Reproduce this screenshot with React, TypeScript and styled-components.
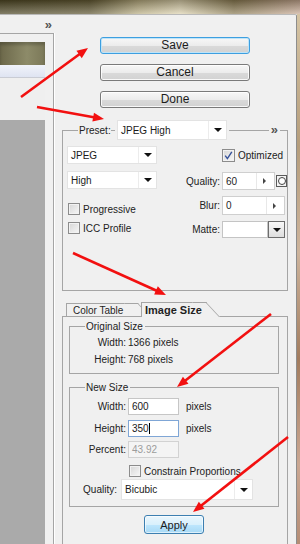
import React from 'react';
import styled, { createGlobalStyle } from 'styled-components';

const LINE = '#a5a5a5';

const GlobalStyle = createGlobalStyle`
  html, body { margin: 0; padding: 0; }
  body {
    width: 300px;
    height: 544px;
    overflow: hidden;
    background: #f0f0f0;
    font-family: "Liberation Sans", Arial, sans-serif;
    font-size: 10px;
    color: #1f1f1f;
  }
  * { box-sizing: border-box; }
`;

const Screen = styled.div`
  position: relative;
  width: 300px;
  height: 544px;
  overflow: hidden;
  display: flex;
  flex-direction: column;
`;

const PhotoTop = styled.div`
  height: 14px;
  flex: none;
  background:
    linear-gradient(to bottom, rgba(25, 20, 0, 0.35), rgba(255, 255, 245, 0.3)),
    linear-gradient(to right, #4b4528 0%, #5f5737 30%, #b9ae88 46%, #ddd3b5 60%, #8a7b58 78%, #c9ab9b 100%);
`;

const Stage = styled.div`
  flex: 1;
  display: flex;
  min-height: 0;
`;

const Dialog = styled.div`
  width: 297px;
  flex: none;
  display: flex;
  background: #f0f0f0;
  border-top: 1px solid #b9b9b9;
  border-right: 1px solid #8d8d8d;
  border-top-right-radius: 2px;
`;

const PhotoEdge = styled.div`
  flex: 1;
  background: linear-gradient(to bottom, #d5c4a4 0%, #b59d7b 25%, #cdb49c 45%, #a27c5e 65%, #caa792 85%, #b58d75 100%);
`;

const SidePane = styled.div`
  width: 54px;
  flex: none;
  display: flex;
  flex-direction: column;
`;

const SideHeader = styled.div`
  height: 18px;
  display: flex;
  justify-content: flex-end;
  align-items: center;
  padding: 1px 2px 0 0;
`;

const Chevrons = styled.span<{ $mx?: number }>`
  font-size: 13px;
  font-weight: 700;
  color: #555555;
  margin: 0 ${p => p.$mx ?? 0}px;
  line-height: 10px;
`;

const PreviewBox = styled.div`
  flex: 1;
  border-top: 1px solid ${LINE};
  border-right: 1px solid ${LINE};
  box-shadow: 1px 0 0 #ffffff;
  padding: 8px 8px 0 0;
  display: flex;
  flex-direction: column;
`;

const Thumb = styled.div`
  height: 23px;
  background: linear-gradient(to right, #6c684a, #8d8b69 60%, #7b7858);
  box-shadow: inset 0 3px 3px rgba(0, 0, 0, 0.2);
`;

const SelectedRow = styled.div`
  height: 13px;
  background: linear-gradient(#f1f3fa, #dfe4f2);
  border-bottom: 1px solid #c9ccd4;
`;

const BlankRow = styled.div`
  height: 42px;
  background: #efefef;
`;

const GrayFill = styled.div`
  flex: 1;
  background: #aaaaaa;
`;

const MainPane = styled.div`
  flex: 1;
  min-width: 0;
  display: flex;
  flex-direction: column;
  padding: 22px 8px 0 8px;
`;

const ButtonStack = styled.div`
  align-self: center;
  width: 150px;
  display: flex;
  flex-direction: column;
  gap: 10px;
`;

const DialogButton = styled.button<{ $focused?: boolean }>`
  height: 17px;
  margin: 0;
  padding: 0;
  font-family: "Liberation Sans", Arial, sans-serif;
  font-size: 12px;
  line-height: 15px;
  color: #1c1c1c;
  border-radius: 3px;
  border: 1px solid ${p => (p.$focused ? '#3d9fe0' : '#7a7a7a')};
  background: linear-gradient(#f7f7f7, #ececec 50%, #dadada 51%, #d2d2d2);
  box-shadow: inset 0 0 0 1px ${p => (p.$focused ? '#bfe4f8' : 'rgba(255,255,255,0.85)')};
`;

const SettingsGroup = styled.div`
  margin-top: 12px;
  display: flex;
  flex-direction: column;
`;

const GroupHeader = styled.div<{ $h: number }>`
  height: ${p => p.$h}px;
  display: flex;
  align-items: center;
  flex: none;
`;

const Corner = styled.div<{ $side: 'left' | 'right'; $w: number }>`
  align-self: flex-end;
  height: 50%;
  width: ${p => p.$w}px;
  flex: none;
  border-top: 1px solid ${LINE};
  ${p => (p.$side === 'left' ? `border-left: 1px solid ${LINE};` : `border-right: 1px solid ${LINE};`)}
`;

const Rule = styled.div<{ $w?: number; $ml?: number }>`
  align-self: flex-end;
  height: 50%;
  border-top: 1px solid ${LINE};
  margin-left: ${p => p.$ml ?? 0}px;
  ${p => (p.$w ? `width: ${p.$w}px; flex: none;` : 'flex: 1;')}
`;

const HeaderLabel = styled.span<{ $w?: number }>`
  margin-left: 1px;
  ${p => (p.$w ? `width: ${p.$w}px; flex: none;` : 'padding-right: 2px;')}
  font-size: 10px;
  color: #222;
  white-space: nowrap;
`;

const SettingsBody = styled.div`
  height: 151px;
  border: 1px solid ${LINE};
  border-top: none;
  display: flex;
  padding-left: 4px;
`;

const FormatColumn = styled.div`
  width: 90px;
  flex: none;
  display: flex;
  flex-direction: column;
  padding-top: 6px;
`;

const Select = styled.div<{ $w: number; $h: number; $ml?: number; $mt?: number }>`
  width: ${p => p.$w}px;
  height: ${p => p.$h}px;
  flex: none;
  margin-left: ${p => p.$ml ?? 0}px;
  margin-top: ${p => p.$mt ?? 0}px;
  display: flex;
  background: #ffffff;
  border: 1px solid #e3e3e3;
`;

const SelectValue = styled.span`
  flex: 1;
  display: flex;
  align-items: center;
  padding-left: 3px;
  font-size: 10px;
  color: #1a1a1a;
  white-space: nowrap;
`;

const SelectArrow = styled.span`
  width: 18px;
  flex: none;
  display: flex;
  align-items: center;
  justify-content: center;
  border-left: 1px solid #ececec;
`;

const DownTriangle = styled.span`
  width: 0;
  height: 0;
  border-left: 4px solid transparent;
  border-right: 4px solid transparent;
  border-top: 4px solid #111;
`;

const RightTriangle = styled.span`
  width: 0;
  height: 0;
  border-top: 3px solid transparent;
  border-bottom: 3px solid transparent;
  border-left: 3px solid #444;
`;

const CheckRow = styled.label<{ $mt?: number; $ml?: number }>`
  display: flex;
  align-items: center;
  gap: 3px;
  margin-top: ${p => p.$mt ?? 0}px;
  margin-left: ${p => p.$ml ?? 0}px;
  font-size: 10px;
  color: #222;
  white-space: nowrap;
`;

const CheckBox = styled.span<{ $size?: number }>`
  width: ${p => p.$size ?? 12}px;
  height: ${p => p.$size ?? 12}px;
  flex: none;
  display: inline-flex;
  align-items: center;
  justify-content: center;
  border: 1px solid #8c8c8c;
  background: linear-gradient(135deg, #d6d6d6, #f7f7f7);
  box-shadow: inset 0 0 0 1px #f2f2f2;
`;

const OptionsColumn = styled.div`
  flex: 1;
  display: flex;
  flex-direction: column;
  padding: 9px 1px 0 0;
`;

const OptionRow = styled.div<{ $h: number; $mt?: number }>`
  height: ${p => p.$h}px;
  margin-top: ${p => p.$mt ?? 0}px;
  display: grid;
  grid-template-columns: 1fr 64px;
  column-gap: 2px;
  align-items: center;
`;

const OptionLabel = styled.span`
  text-align: right;
  font-size: 10px;
  color: #222;
`;

const OptionControl = styled.div`
  grid-column: 2;
  height: 100%;
  display: flex;
  align-items: center;
  gap: 1px;
`;

const NumberField = styled.div<{ $w: number }>`
  width: ${p => p.$w}px;
  height: 100%;
  flex: none;
  display: flex;
  background: #ffffff;
  border: 1px solid #cfcfcf;
`;

const FieldValue = styled.span`
  flex: 1;
  display: flex;
  align-items: center;
  padding-left: 3px;
  font-size: 10px;
`;

const StepArrow = styled.span`
  width: 18px;
  flex: none;
  display: flex;
  align-items: center;
  padding-left: 6px;
  border-left: 1px solid #e8e8e8;
`;

const RoundButton = styled.span`
  width: 11px;
  height: 12px;
  flex: none;
  display: flex;
  align-items: center;
  justify-content: center;
  border: 1px solid #5a5a5a;
  background: #f4f4f4;
`;

const Ring = styled.span`
  width: 8px;
  height: 8px;
  border-radius: 50%;
  border: 1px solid #444;
  background: #ffffff;
`;

const SwatchField = styled.span`
  width: 46px;
  height: 100%;
  flex: none;
  background: #ffffff;
  border: 1px solid #c4c4c4;
`;

const SwatchButton = styled.span`
  width: 17px;
  height: 100%;
  flex: none;
  margin-left: -1px;
  display: flex;
  align-items: center;
  justify-content: center;
  border: 1px solid #6d6d6d;
  background: linear-gradient(#f8f8f8, #dedede);
`;

const TabStrip = styled.div`
  position: relative;
  z-index: 1;
  margin-top: 11px;
  height: 14px;
  flex: none;
  display: flex;
  align-items: flex-end;
  padding-left: 4px;
`;

const Tab = styled.div<{ $active?: boolean; $w: number }>`
  position: relative;
  z-index: ${p => (p.$active ? 2 : 1)};
  width: ${p => p.$w}px;
  flex: none;
  height: ${p => (p.$active ? 15 : 13)}px;
  margin-bottom: ${p => (p.$active ? -1 : 0)}px;
  margin-right: 4px;
  padding-left: ${p => (p.$active ? 3 : 6)}px;
  display: flex;
  align-items: center;
  background: #f0f0f0;
  border-top: 1px solid ${LINE};
  border-left: 1px solid ${LINE};
  font-size: ${p => (p.$active ? 11 : 10)}px;
  font-weight: ${p => (p.$active ? 700 : 400)};
  color: #1f1f1f;
  white-space: nowrap;
  &::after {
    content: '';
    position: absolute;
    z-index: -1;
    top: -1px;
    bottom: 0;
    right: -13px;
    width: 13px;
    background: #f0f0f0;
    border-top: 1px solid ${LINE};
    border-right: 1px solid ${LINE};
    transform: skewX(43deg);
    transform-origin: bottom left;
  }
`;

const TabPanel = styled.div`
  flex: 1;
  display: flex;
  flex-direction: column;
  border: 1px solid ${LINE};
  border-bottom: none;
  padding: 3px 8px 0 6px;
`;

const SizeGroup = styled.div<{ $mt?: number }>`
  margin-top: ${p => p.$mt ?? 0}px;
  display: flex;
  flex-direction: column;
`;

const SizeBody = styled.div<{ $pt: number; $pb: number }>`
  border: 1px solid ${LINE};
  border-top: none;
  display: flex;
  flex-direction: column;
  padding: ${p => p.$pt}px 0 ${p => p.$pb}px 0;
`;

const SizeRow = styled.div<{ $h: number; $mt?: number }>`
  height: ${p => p.$h}px;
  margin-top: ${p => p.$mt ?? 0}px;
  display: flex;
  align-items: center;
  gap: 2px;
  font-size: 10px;
  color: #222;
`;

const SizeLabel = styled.span<{ $w?: number }>`
  width: ${p => p.$w ?? 56}px;
  flex: none;
  text-align: right;
`;

const Unit = styled.span`
  margin-left: 5px;
`;

const TextBox = styled.span<{ $focused?: boolean; $disabled?: boolean }>`
  width: 51px;
  height: 100%;
  flex: none;
  display: flex;
  align-items: center;
  padding-left: 3px;
  font-size: 10px;
  color: ${p => (p.$disabled ? '#9c9c9c' : '#1a1a1a')};
  background: ${p => (p.$disabled ? '#f4f4f4' : '#ffffff')};
  border: 1px solid ${p => (p.$focused ? '#7fa6d6' : p.$disabled ? '#d2d2d2' : '#c6c6c6')};
`;

const Caret = styled.span`
  width: 1px;
  height: 11px;
  background: #000;
`;

const ApplyButton = styled.button`
  align-self: center;
  margin-top: 8px;
  width: 60px;
  height: 19px;
  padding: 0;
  font-family: "Liberation Sans", Arial, sans-serif;
  font-size: 11px;
  color: #1c1c1c;
  border-radius: 3px;
  border: 1px solid #3c7fb1;
  background: linear-gradient(#eaf6fd, #d9f0fc 50%, #bee6fd 51%, #a7d9f5);
  box-shadow: inset 0 0 0 1px rgba(255, 255, 255, 0.6);
`;

const ArrowLayer = styled.svg`
  position: absolute;
  left: 0;
  top: 0;
  width: 300px;
  height: 544px;
  pointer-events: none;
`;

type Arrow = { x1: number; y1: number; x2: number; y2: number };

const arrows: Arrow[] = [
  { x1: 21, y1: 97, x2: 88, y2: 48 },
  { x1: 37, y1: 107, x2: 104, y2: 119 },
  { x1: 73, y1: 253, x2: 166, y2: 295 },
  { x1: 271, y1: 314, x2: 177, y2: 387 },
  { x1: 288, y1: 437, x2: 193, y2: 512 },
];

function RedArrow({ x1, y1, x2, y2 }: Arrow) {
  const dx = x2 - x1;
  const dy = y2 - y1;
  const len = Math.hypot(dx, dy);
  const ux = dx / len;
  const uy = dy / len;
  const headLen = 11;
  const half = 4.5;
  const bx = x2 - ux * headLen;
  const by = y2 - uy * headLen;
  const p1 = `${bx - uy * half},${by + ux * half}`;
  const p2 = `${bx + uy * half},${by - ux * half}`;
  return (
    <g>
      <line x1={x1} y1={y1} x2={bx + ux * 2} y2={by + uy * 2} stroke="#f21010" strokeWidth={2.6} />
      <polygon points={`${x2},${y2} ${p1} ${p2}`} fill="#f21010" />
    </g>
  );
}

function CheckMark() {
  return (
    <svg width="9" height="9" viewBox="0 0 9 9">
      <path d="M1.2 4.6 L3.4 7.6 L7.8 0.8" fill="none" stroke="#35519a" strokeWidth="1.4" />
    </svg>
  );
}

export default function App() {
  return (
    <>
      <GlobalStyle />
      <Screen>
        <PhotoTop />
        <Stage>
          <Dialog>
            <SidePane>
              <SideHeader>
                <Chevrons>»</Chevrons>
              </SideHeader>
              <PreviewBox>
                <Thumb />
                <SelectedRow />
                <BlankRow />
                <GrayFill />
              </PreviewBox>
            </SidePane>
            <MainPane>
              <ButtonStack>
                <DialogButton $focused>Save</DialogButton>
                <DialogButton>Cancel</DialogButton>
                <DialogButton>Done</DialogButton>
              </ButtonStack>

              <SettingsGroup>
                <GroupHeader $h={20}>
                  <Corner $side="left" $w={16} />
                  <HeaderLabel $w={32}>Preset:</HeaderLabel>
                  <Rule $w={4} />
                  <Select $w={110} $h={20} $ml={2}>
                    <SelectValue>JPEG High</SelectValue>
                    <SelectArrow>
                      <DownTriangle />
                    </SelectArrow>
                  </Select>
                  <Rule $ml={2} />
                  <Chevrons $mx={2}>»</Chevrons>
                  <Corner $side="right" $w={8} />
                </GroupHeader>
                <SettingsBody>
                  <FormatColumn>
                    <Select $w={90} $h={18}>
                      <SelectValue>JPEG</SelectValue>
                      <SelectArrow>
                        <DownTriangle />
                      </SelectArrow>
                    </Select>
                    <Select $w={90} $h={18} $mt={7}>
                      <SelectValue>High</SelectValue>
                      <SelectArrow>
                        <DownTriangle />
                      </SelectArrow>
                    </Select>
                    <CheckRow $mt={14} $ml={1}>
                      <CheckBox />
                      Progressive
                    </CheckRow>
                    <CheckRow $mt={7} $ml={1}>
                      <CheckBox />
                      ICC Profile
                    </CheckRow>
                  </FormatColumn>
                  <OptionsColumn>
                    <OptionRow $h={13}>
                      <OptionControl>
                        <CheckRow>
                          <CheckBox $size={13}>
                            <CheckMark />
                          </CheckBox>
                          Optimized
                        </CheckRow>
                      </OptionControl>
                    </OptionRow>
                    <OptionRow $h={18} $mt={10}>
                      <OptionLabel>Quality:</OptionLabel>
                      <OptionControl>
                        <NumberField $w={53}>
                          <FieldValue>60</FieldValue>
                          <StepArrow>
                            <RightTriangle />
                          </StepArrow>
                        </NumberField>
                        <RoundButton>
                          <Ring />
                        </RoundButton>
                      </OptionControl>
                    </OptionRow>
                    <OptionRow $h={19} $mt={6}>
                      <OptionLabel>Blur:</OptionLabel>
                      <OptionControl>
                        <NumberField $w={63}>
                          <FieldValue>0</FieldValue>
                          <StepArrow>
                            <RightTriangle />
                          </StepArrow>
                        </NumberField>
                      </OptionControl>
                    </OptionRow>
                    <OptionRow $h={17} $mt={6}>
                      <OptionLabel>Matte:</OptionLabel>
                      <OptionControl>
                        <SwatchField />
                        <SwatchButton>
                          <DownTriangle />
                        </SwatchButton>
                      </OptionControl>
                    </OptionRow>
                  </OptionsColumn>
                </SettingsBody>
              </SettingsGroup>

              <TabStrip>
                <Tab $w={71}>Color Table</Tab>
                <Tab $w={66} $active>
                  Image Size
                </Tab>
              </TabStrip>
              <TabPanel>
                <SizeGroup>
                  <GroupHeader $h={12}>
                    <Corner $side="left" $w={16} />
                    <HeaderLabel>Original Size</HeaderLabel>
                    <Rule />
                    <Corner $side="right" $w={4} />
                  </GroupHeader>
                  <SizeBody $pt={2} $pb={5}>
                    <SizeRow $h={17}>
                      <SizeLabel>Width:</SizeLabel>
                      <span>1366 pixels</span>
                    </SizeRow>
                    <SizeRow $h={17}>
                      <SizeLabel>Height:</SizeLabel>
                      <span>768 pixels</span>
                    </SizeRow>
                  </SizeBody>
                </SizeGroup>

                <SizeGroup $mt={7}>
                  <GroupHeader $h={12}>
                    <Corner $side="left" $w={16} />
                    <HeaderLabel>New Size</HeaderLabel>
                    <Rule />
                    <Corner $side="right" $w={4} />
                  </GroupHeader>
                  <SizeBody $pt={5} $pb={6}>
                    <SizeRow $h={17}>
                      <SizeLabel>Width:</SizeLabel>
                      <TextBox>600</TextBox>
                      <Unit>pixels</Unit>
                    </SizeRow>
                    <SizeRow $h={17} $mt={5}>
                      <SizeLabel>Height:</SizeLabel>
                      <TextBox $focused>
                        350
                        <Caret />
                      </TextBox>
                      <Unit>pixels</Unit>
                    </SizeRow>
                    <SizeRow $h={17} $mt={4}>
                      <SizeLabel>Percent:</SizeLabel>
                      <TextBox $disabled>43.92</TextBox>
                    </SizeRow>
                    <SizeRow $h={12} $mt={7}>
                      <SizeLabel />
                      <CheckRow $ml={1}>
                        <CheckBox />
                        Constrain Proportions
                      </CheckRow>
                    </SizeRow>
                    <SizeRow $h={21} $mt={2}>
                      <SizeLabel $w={47}>Quality:</SizeLabel>
                      <Select $w={132} $h={21} $ml={2}>
                        <SelectValue>Bicubic</SelectValue>
                        <SelectArrow>
                          <DownTriangle />
                        </SelectArrow>
                      </Select>
                    </SizeRow>
                  </SizeBody>
                </SizeGroup>

                <ApplyButton>Apply</ApplyButton>
              </TabPanel>
            </MainPane>
          </Dialog>
          <PhotoEdge />
        </Stage>
        <ArrowLayer viewBox="0 0 300 544">
          {arrows.map((a, i) => (
            <RedArrow key={i} {...a} />
          ))}
        </ArrowLayer>
      </Screen>
    </>
  );
}
